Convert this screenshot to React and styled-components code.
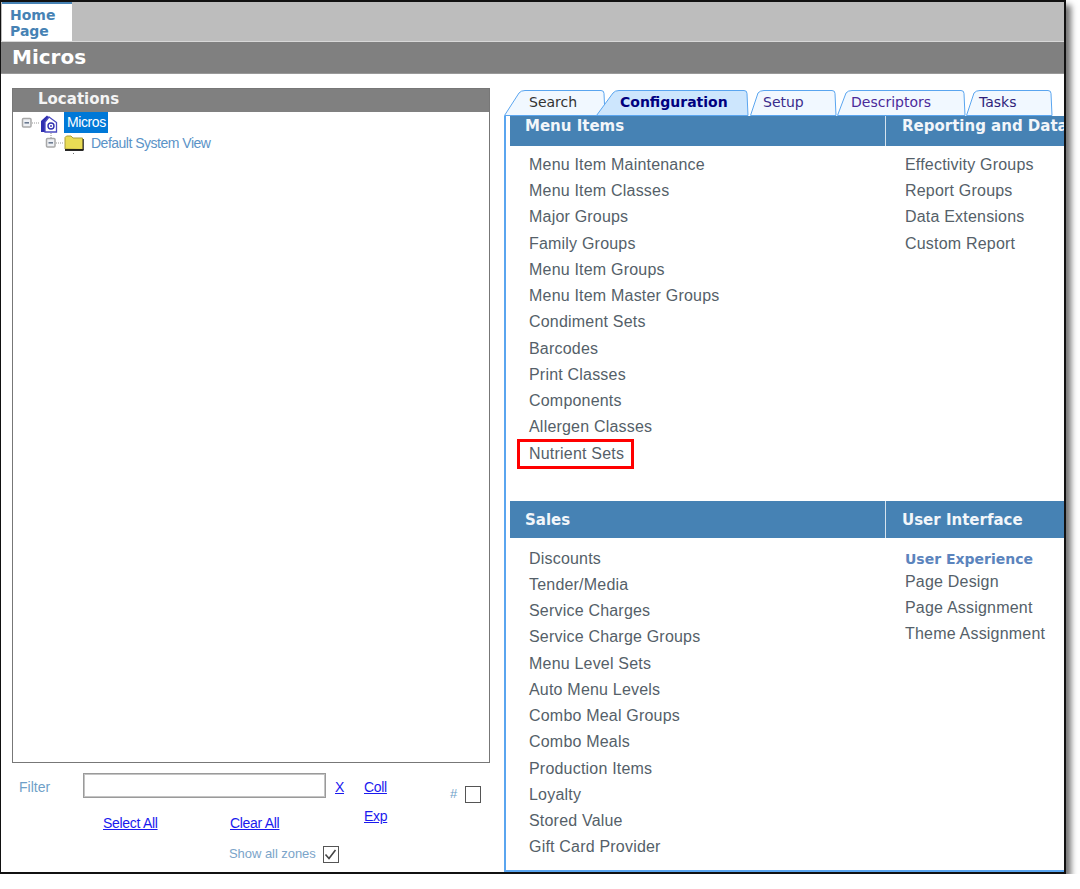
import React from 'react';
import styled, { createGlobalStyle } from 'styled-components';

const GlobalStyle = createGlobalStyle`
  html, body {
    margin: 0;
    padding: 0;
    background: #fff;
  }
`;

const Frame = styled.div`
  box-sizing: border-box;
  width: 1066px;
  height: 874px;
  border: 2px solid #111;
  border-left-width: 1px;
  background: #fff;
  box-shadow: 5px 5px 6px rgba(0, 0, 0, 0.55);
  display: flex;
  flex-direction: column;
  overflow: hidden;
`;

const TopBar = styled.div`
  height: 39px;
  flex: none;
  background: #bdbdbd;
  border-bottom: 1px solid #d8d8d8;
  display: flex;
  padding-left: 1px;
`;

const HomeTab = styled.div`
  box-sizing: border-box;
  width: 70px;
  background: #fff;
  border-top: 2px solid #4682b4;
  padding: 3px 0 0 8px;
  font: bold 14px/16px "DejaVu Sans", sans-serif;
  color: #4682b4;
`;

const TitleBar = styled.div`
  height: 31px;
  flex: none;
  background: #808080;
  color: #fff;
  padding-left: 11px;
  font: bold 20px/31px "DejaVu Sans", sans-serif;
  border-bottom: 1px solid #999;
`;

const Body = styled.div`
  flex: 1;
  min-height: 0;
  display: flex;
`;

const LeftColumn = styled.div`
  width: 478px;
  flex: none;
  margin-left: 11px;
  padding-top: 14px;
  display: flex;
  flex-direction: column;
`;

const TreePanel = styled.div`
  box-sizing: border-box;
  height: 675px;
  border: 1px solid #777;
  flex: none;
`;

const PanelHeader = styled.div`
  height: 23px;
  background: #808080;
  color: #f4f4f4;
  padding-left: 25px;
  font: bold 15px/21px "DejaVu Sans", sans-serif;
`;

const TreeRow = styled.div`
  display: flex;
  align-items: center;
  height: ${({ $tall }) => ($tall ? 21 : 20)}px;
  padding-left: ${({ $indent }) => $indent}px;
`;

const SelectedLabel = styled.span`
  background: #0078d7;
  color: #fff;
  font: 14px/21px "Liberation Sans", sans-serif;
  letter-spacing: -0.4px;
  padding: 0 2px 0 3px;
  margin-left: 6px;
`;

const TreeLabel = styled.span`
  color: #5b93c7;
  font: 14px/20px "Liberation Sans", sans-serif;
  letter-spacing: -0.5px;
  margin-left: 7px;
`;

const FilterGrid = styled.div`
  display: grid;
  grid-template-columns: 64px 20px 127px 96px 38px 86px 1fr;
  grid-template-rows: 28px 30px 34px;
  padding: 10px 0 0 7px;
  font: 14px/16px "Liberation Sans", sans-serif;
`;

const FilterLabel = styled.span`
  color: #6f9fc8;
  align-self: center;
`;

const FilterInput = styled.input`
  grid-column: 2 / span 3;
  box-sizing: border-box;
  height: 25px;
  border: 1px solid #9a9a9a;
  outline: 1px solid #c4c4c4;
  outline-offset: -2px;
  background: #fff;
  margin: 0;
`;

const BlueLink = styled.a`
  color: #1a1aee;
  text-decoration: underline;
  letter-spacing: -0.3px;
  align-self: ${({ $align }) => $align || 'center'};
  justify-self: start;
  margin-left: ${({ $offset }) => $offset || 0}px;
  grid-column: ${({ $col }) => $col};
`;

const HashCell = styled.div`
  grid-column: 7;
  grid-row: 1 / span 2;
  display: flex;
  gap: 8px;
  align-items: flex-start;
  padding-top: 13px;
  color: #6f9fc8;
  font-size: 13px;
`;

const Square = styled.span`
  box-sizing: border-box;
  width: 16px;
  height: 17px;
  flex: none;
  border: 1px solid #555;
  background: #fff;
  display: inline-flex;
  align-items: center;
  justify-content: center;
`;

const ZonesCell = styled.div`
  grid-column: 4 / span 4;
  grid-row: 3;
  display: flex;
  align-items: center;
  gap: 7px;
  padding-top: 12px;
  margin-left: -1px;
  color: #7ba4c9;
  font-size: 13px;
  letter-spacing: -0.05px;
`;

const RightColumn = styled.div`
  flex: 1;
  min-width: 0;
  margin-left: 14px;
  padding-top: 16px;
  display: flex;
  flex-direction: column;
`;

const TabStrip = styled.div`
  height: 26px;
  flex: none;
  display: flex;
`;

const Tab = styled.div`
  position: relative;
  height: 26px;
  width: ${({ $w }) => $w}px;
  margin-left: ${({ $overlap }) => -($overlap || 0)}px;
  flex: none;
  z-index: ${({ $active }) => ($active ? 2 : 1)};
`;

const TabShape = styled.svg`
  position: absolute;
  left: 0;
  top: 0;
`;

const TabLabel = styled.span`
  position: relative;
  display: block;
  padding-left: ${({ $pad }) => $pad}px;
  font: ${({ $active }) => ($active ? 'bold' : 'normal')} 14px/25px "DejaVu Sans", sans-serif;
  color: ${({ $active, $color }) => ($active ? '#00007f' : $color)};
`;

const Content = styled.div`
  flex: 1;
  min-height: 0;
  border-left: 2px solid #5aa5ef;
  border-bottom: 2px solid #5aa5ef;
  padding-left: 4px;
  overflow: hidden;
`;

const Section = styled.section`
  display: grid;
  grid-template-columns: 375px 200px;
  width: 575px;
  height: ${({ $h }) => $h}px;
`;

const ColumnHeader = styled.div`
  background: #4682b4;
  height: ${({ $short }) => ($short ? 30 : 37)}px;
  box-sizing: border-box;
  border-left: ${({ $split }) => ($split ? '1px solid #d5e3ee' : 'none')};
  color: #f2f6fa;
  padding-left: ${({ $split }) => ($split ? 16 : 15)}px;
  font: bold 15px/${({ $short }) => ($short ? 21 : 38)}px "DejaVu Sans", sans-serif;
  white-space: nowrap;
`;

const ClippedColumn = styled.div`
  min-width: 0;
`;

const ItemList = styled.div`
  padding: ${({ $top }) => $top}px 0 0 ${({ $left }) => $left}px;
  display: flex;
  flex-direction: column;
`;

const GroupTitle = styled.div`
  font: bold 14px/16px "DejaVu Sans", sans-serif;
  color: #5b84bd;
  margin-bottom: 1.6px;
`;

const Item = styled.div`
  position: relative;
  height: 26.25px;
  font: 16px/26px "Liberation Sans", sans-serif;
  letter-spacing: 0.2px;
  color: #555f69;
  white-space: nowrap;
`;

const Highlight = styled.span`
  position: absolute;
  left: -12px;
  top: -2px;
  width: 117px;
  height: 30px;
  box-sizing: border-box;
  border: 3px solid #f00;
`;

const menuItems = [
  'Menu Item Maintenance', 'Menu Item Classes', 'Major Groups', 'Family Groups',
  'Menu Item Groups', 'Menu Item Master Groups', 'Condiment Sets', 'Barcodes',
  'Print Classes', 'Components', 'Allergen Classes',
];
const reporting = ['Effectivity Groups', 'Report Groups', 'Data Extensions', 'Custom Report'];
const sales = [
  'Discounts', 'Tender/Media', 'Service Charges', 'Service Charge Groups', 'Menu Level Sets',
  'Auto Menu Levels', 'Combo Meal Groups', 'Combo Meals', 'Production Items', 'Loyalty',
  'Stored Value', 'Gift Card Provider',
];
const ui = ['Page Design', 'Page Assignment', 'Theme Assignment'];

const tabs = [
  { label: 'Search', w: 102, pad: 25, color: '#333', top: 19, right: 100 },
  { label: 'Configuration', w: 154, pad: 24, active: true, overlap: 10, top: 21, right: 151 },
  { label: 'Setup', w: 87, pad: 13, color: '#3a2c8c', top: 12, right: 85 },
  { label: 'Descriptors', w: 129, pad: 14, color: '#4b2a9a', top: 13, right: 127 },
  { label: 'Tasks', w: 87, pad: 13, color: '#2f1f7a', top: 12, right: 85 },
];

const TabBack = ({ w, top, right, active }) => (
  <TabShape width={w} height={26} viewBox={`0 0 ${w} 26`}>
    <path
      d={`M0.5 25.5 L${top - 4} 3 Q${top - 2} 0.5 ${top + 2} 0.5 L${right - 3} 0.5 Q${right} 0.5 ${right} 3.5 L${right + 1} 25.5 Z`}
      fill={active ? '#cde6fd' : '#f1f8ff'}
      stroke="#5aa5ef"
    />
  </TabShape>
);

const Expander = () => (
  <svg width="19" height="20" viewBox="0 0 19 20">
    <rect x="1.5" y="5.5" width="8.5" height="8.5" rx="1" fill="#eef0f4" stroke="#a8a8a8" strokeWidth="1.5" />
    <path d="M3.5 9.8H8" stroke="#6b7a90" strokeWidth="1.6" />
    <path d="M11 10H19" stroke="#999" strokeDasharray="1 1" />
  </svg>
);

const HouseIcon = () => (
  <svg width="18" height="20" viewBox="0 0 18 20" overflow="visible">
    <path d="M1 8L7 2.5L9 4.5V19H1Z" fill="#2f2fb0" />
    <path d="M9 4L16.5 9.5V19H5V9Z" fill="#fff" stroke="#4a4ac0" strokeWidth="1.3" />
    <circle cx="11" cy="13" r="3" fill="none" stroke="#2f2fb0" strokeWidth="1.4" />
    <circle cx="11" cy="13" r="0.9" fill="#2f2fb0" />
    <path d="M11 20V25" stroke="#888" strokeDasharray="1 1" />
  </svg>
);

const FolderIcon = () => (
  <svg width="20" height="18" viewBox="0 0 20 18" overflow="visible">
    <path d="M1 15V3.5L2.5 2H7L9 4H18.5V15.5Z" fill="#e9dc55" stroke="#a99c3a" />
    <path d="M1 16H19.5" stroke="#111" strokeWidth="1.8" />
    <path d="M19.3 5V16" stroke="#222" />
    <path d="M9.5 19V20" stroke="#777" />
  </svg>
);

const App = () => (
  <>
    <GlobalStyle />
    <Frame>
      <TopBar>
        <HomeTab>Home<br />Page</HomeTab>
      </TopBar>
      <TitleBar>Micros</TitleBar>
      <Body>
        <LeftColumn>
          <TreePanel>
            <PanelHeader>Locations</PanelHeader>
            <TreeRow $indent={8} $tall>
              <Expander />
              <HouseIcon />
              <SelectedLabel>Micros</SelectedLabel>
            </TreeRow>
            <TreeRow $indent={32}>
              <Expander />
              <FolderIcon />
              <TreeLabel>Default System View</TreeLabel>
            </TreeRow>
          </TreePanel>
          <FilterGrid>
            <FilterLabel>Filter</FilterLabel>
            <FilterInput />
            <BlueLink $col={5} $offset={9}>X</BlueLink>
            <BlueLink $col={6}>Coll</BlueLink>
            <HashCell>
              <span>#</span>
              <Square />
            </HashCell>
            <BlueLink $col={3} $align="end">Select All</BlueLink>
            <BlueLink $col={4} $align="end">Clear All</BlueLink>
            <BlueLink $col={6} $align="center">Exp</BlueLink>
            <ZonesCell>
              <span>Show all zones</span>
              <Square>
                <svg width="13" height="13" viewBox="0 0 13 13">
                  <path d="M1.5 6.5L5 10.5L11.5 2" fill="none" stroke="#444" strokeWidth="1.6" />
                </svg>
              </Square>
            </ZonesCell>
          </FilterGrid>
        </LeftColumn>
        <RightColumn>
          <TabStrip>
            {tabs.map((tab) => (
              <Tab key={tab.label} $w={tab.w} $overlap={tab.overlap} $active={tab.active}>
                <TabBack w={tab.w} top={tab.top} right={tab.right} active={tab.active} />
                <TabLabel $pad={tab.pad} $active={tab.active} $color={tab.color}>{tab.label}</TabLabel>
              </Tab>
            ))}
          </TabStrip>
          <Content>
            <Section $h={385}>
              <div>
                <ColumnHeader $short>Menu Items</ColumnHeader>
                <ItemList $top={5.9} $left={19}>
                  {menuItems.map((name) => <Item key={name}>{name}</Item>)}
                  <Item>Nutrient Sets<Highlight /></Item>
                </ItemList>
              </div>
              <ClippedColumn>
                <ColumnHeader $short $split>Reporting and Data</ColumnHeader>
                <ItemList $top={5.9} $left={20}>
                  {reporting.map((name) => <Item key={name}>{name}</Item>)}
                </ItemList>
              </ClippedColumn>
            </Section>
            <Section $h={372}>
              <div>
                <ColumnHeader>Sales</ColumnHeader>
                <ItemList $top={7.7} $left={19}>
                  {sales.map((name) => <Item key={name}>{name}</Item>)}
                </ItemList>
              </div>
              <ClippedColumn>
                <ColumnHeader $split>User Interface</ColumnHeader>
                <ItemList $top={13} $left={20}>
                  <GroupTitle>User Experience</GroupTitle>
                  {ui.map((name) => <Item key={name}>{name}</Item>)}
                </ItemList>
              </ClippedColumn>
            </Section>
          </Content>
        </RightColumn>
      </Body>
    </Frame>
  </>
);

export default App;
